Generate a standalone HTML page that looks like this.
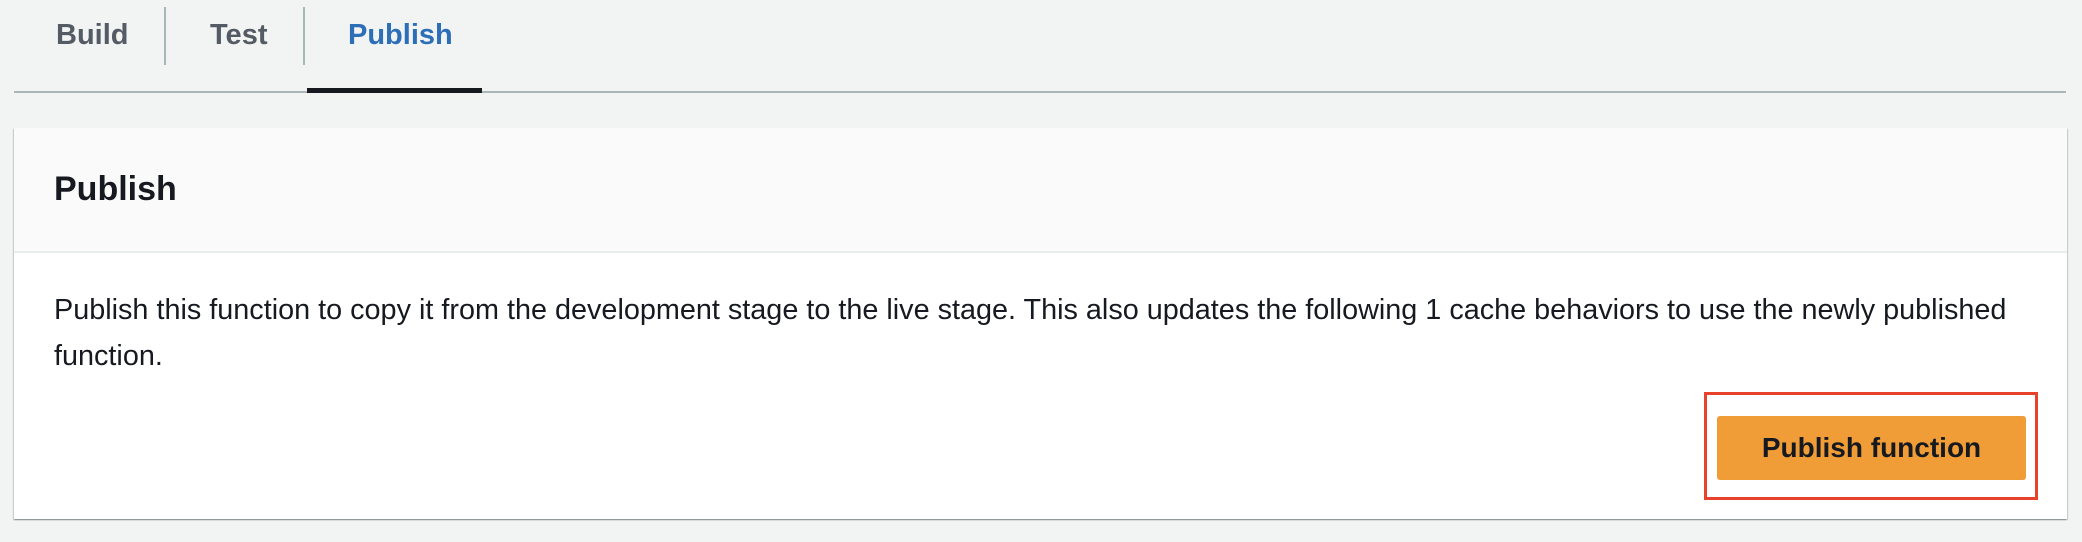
<!DOCTYPE html>
<html><head><meta charset="utf-8"><style>
*{margin:0;padding:0;box-sizing:border-box}
body{width:2082px;height:542px;background:#f2f3f3;font-family:"Liberation Sans",sans-serif;position:relative;overflow:hidden;color:#16191f}
.t{position:absolute;font-weight:bold;font-size:29px;top:18px;line-height:34px;color:#545b64}
.sep{position:absolute;top:7px;width:2px;height:58px;background:#aab7b8}
.line{position:absolute;left:14px;top:91px;width:2052px;height:2px;background:#aab7b8}
.act{position:absolute;left:307px;top:88px;width:175px;height:5px;background:#16191f}
.card{position:absolute;left:14px;top:128px;width:2053px;height:391px;background:#fff;box-shadow:0 1px 1px 0 rgba(0,28,36,.3),1px 1px 1px 0 rgba(0,28,36,.15),-1px 1px 1px 0 rgba(0,28,36,.15);}
.hd{position:absolute;left:0;top:0;width:100%;height:125px;background:#fafafa;border-bottom:2px solid #eaeded}
.h{position:absolute;left:40px;top:41px;font-size:34px;font-weight:bold;line-height:40px}
.p{position:absolute;left:40px;top:159px;font-size:28.8px;line-height:46px;white-space:nowrap}
.red{position:absolute;left:1704px;top:392px;width:334px;height:108px;border:3px solid #e8412c}
.btn{position:absolute;left:1717px;top:416px;width:309px;height:64px;background:#f19d37;border-radius:3px;font-weight:bold;font-size:28px;text-align:center;line-height:64px;color:#16191f}
</style></head><body>
<div class="t" style="left:56px">Build</div>
<div class="sep" style="left:164px"></div>
<div class="t" style="left:210px">Test</div>
<div class="sep" style="left:303px"></div>
<div class="t" style="left:348px;color:#2d6fb7">Publish</div>
<div class="line"></div>
<div class="act"></div>
<div class="card">
<div class="hd"><div class="h">Publish</div></div>
<div class="p">Publish this function to copy it from the development stage to the live stage. This also updates the following 1 cache behaviors to use the newly published<br>function.</div>
</div>
<div class="red"></div>
<div class="btn">Publish function</div>
</body></html>
